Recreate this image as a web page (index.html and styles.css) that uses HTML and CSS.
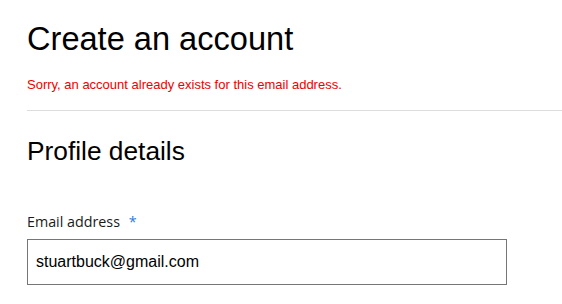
FILE: index.html
```html
<!DOCTYPE html>
<html lang="en">
<head>
<meta charset="utf-8">
<title>Create an account</title>
<link rel="stylesheet" href="styles.css">
</head>
<body>
<main class="page">
  <h1 class="title">Create an account</h1>
  <p class="error">Sorry, an account already exists for this email address.</p>
  <hr class="divider">
  <h2 class="section-title">Profile details</h2>
  <form class="form">
    <label class="label" for="email">Email address <span class="required">*</span></label>
    <input class="input" id="email" type="email" value="stuartbuck@gmail.com">
  </form>
</main>
</body>
</html>
```

FILE: styles.css
```css
html, body {
  margin: 0;
  padding: 0;
  background: #fff;
}

body {
  font-family: "Liberation Sans", Arial, sans-serif;
  color: #000;
  overflow: hidden;
}

.page {
  padding: 19px 0 0 27px;
}

.title {
  margin: 0;
  font-size: 32.6px;
  line-height: 40px;
  font-weight: 400;
}

.error {
  margin: 18px 0 0;
  font-size: 13px;
  line-height: 16px;
  color: #ee0000;
}

.divider {
  margin: 17px 0 0;
  border: 0;
  height: 1px;
  background: #dddddd;
}

.section-title {
  margin: 24px 0 0;
  font-size: 26.3px;
  line-height: 32px;
  font-weight: 400;
}

.form {
  display: flex;
  flex-direction: column;
  align-items: flex-start;
  margin-top: 45px;
}

.label {
  font-family: "Open Sans", "Noto Sans", sans-serif;
  font-size: 14.3px;
  line-height: 20px;
  color: #1a1a1a;
}

.required {
  color: #2b7bd9;
  margin-left: 5px;
}

.input {
  margin-top: 7px;
  box-sizing: border-box;
  width: 480px;
  height: 46px;
  padding: 0 8px;
  border: 1px solid #767676;
  border-radius: 0;
  font-family: "Liberation Sans", Arial, sans-serif;
  font-size: 16px;
  color: #000;
  background: #fff;
  outline: none;
}
```
